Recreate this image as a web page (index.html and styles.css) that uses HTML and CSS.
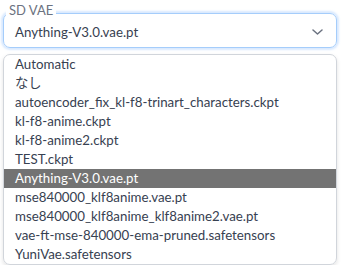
FILE: index.html
```html
<!DOCTYPE html>
<html lang="ja">
<head>
  <meta charset="UTF-8">
  <meta name="viewport" content="width=device-width, initial-scale=1.0">
  <title>SD VAE</title>
  <link rel="stylesheet" href="styles.css">
</head>
<body>
  <div class="field">
    <span class="field-label">SD VAE</span>
    <div class="select">
      <span class="select-value">Anything-V3.0.vae.pt</span>
      <svg class="chevron" width="11" height="6" viewBox="0 0 11 6">
        <path d="M1 1l4.5 4 4.5-4" fill="none" stroke="#6b7280" stroke-width="1.5" stroke-linecap="round" stroke-linejoin="round"/>
      </svg>
    </div>
    <ul class="options">
      <li>Automatic</li>
      <li>なし</li>
      <li>autoencoder_fix_kl-f8-trinart_characters.ckpt</li>
      <li>kl-f8-anime.ckpt</li>
      <li>kl-f8-anime2.ckpt</li>
      <li>TEST.ckpt</li>
      <li class="selected">Anything-V3.0.vae.pt</li>
      <li>mse840000_klf8anime.vae.pt</li>
      <li>mse840000_klf8anime_klf8anime2.vae.pt</li>
      <li>vae-ft-mse-840000-ema-pruned.safetensors</li>
      <li>YuniVae.safetensors</li>
    </ul>
  </div>
</body>
</html>
```

FILE: styles.css
```css
body {
  margin: 0;
  padding: 0;
  background-color: #fff;
  font-family: 'Lato', 'Noto Sans CJK JP', sans-serif;
  color: #374151;
}
.field {
  position: relative;
  padding: 13px 6px 0 3px;
}
.field-label {
  position: absolute;
  top: 4px;
  left: 6px;
  padding: 0 3px;
  background-color: #fff;
  color: #6b7280;
  font-size: 13px;
  line-height: 13px;
}
.select {
  height: 33px;
  display: flex;
  align-items: center;
  justify-content: space-between;
  padding: 2px 13px 0 11px;
  box-sizing: border-box;
  height: 35px;
  border: 1px solid #a5cdfb;
  border-radius: 7px;
  box-shadow: 0 0 2px 2px rgba(191, 219, 254, 0.6);
  font-size: 13.3px;
}
.options {
  list-style: none;
  margin: 6px 0 0 0;
  padding: 0;
  border: 1px solid #d1d5db;
  border-radius: 7px;
  box-shadow: 0 2px 4px rgba(0, 0, 0, 0.12);
  overflow: hidden;
  font-size: 13.3px;
}
.options li {
  height: 19px;
  line-height: 19px;
  padding-left: 11px;
  white-space: nowrap;
}
.options li.selected {
  background-color: #737373;
  color: #fff;
}
```
